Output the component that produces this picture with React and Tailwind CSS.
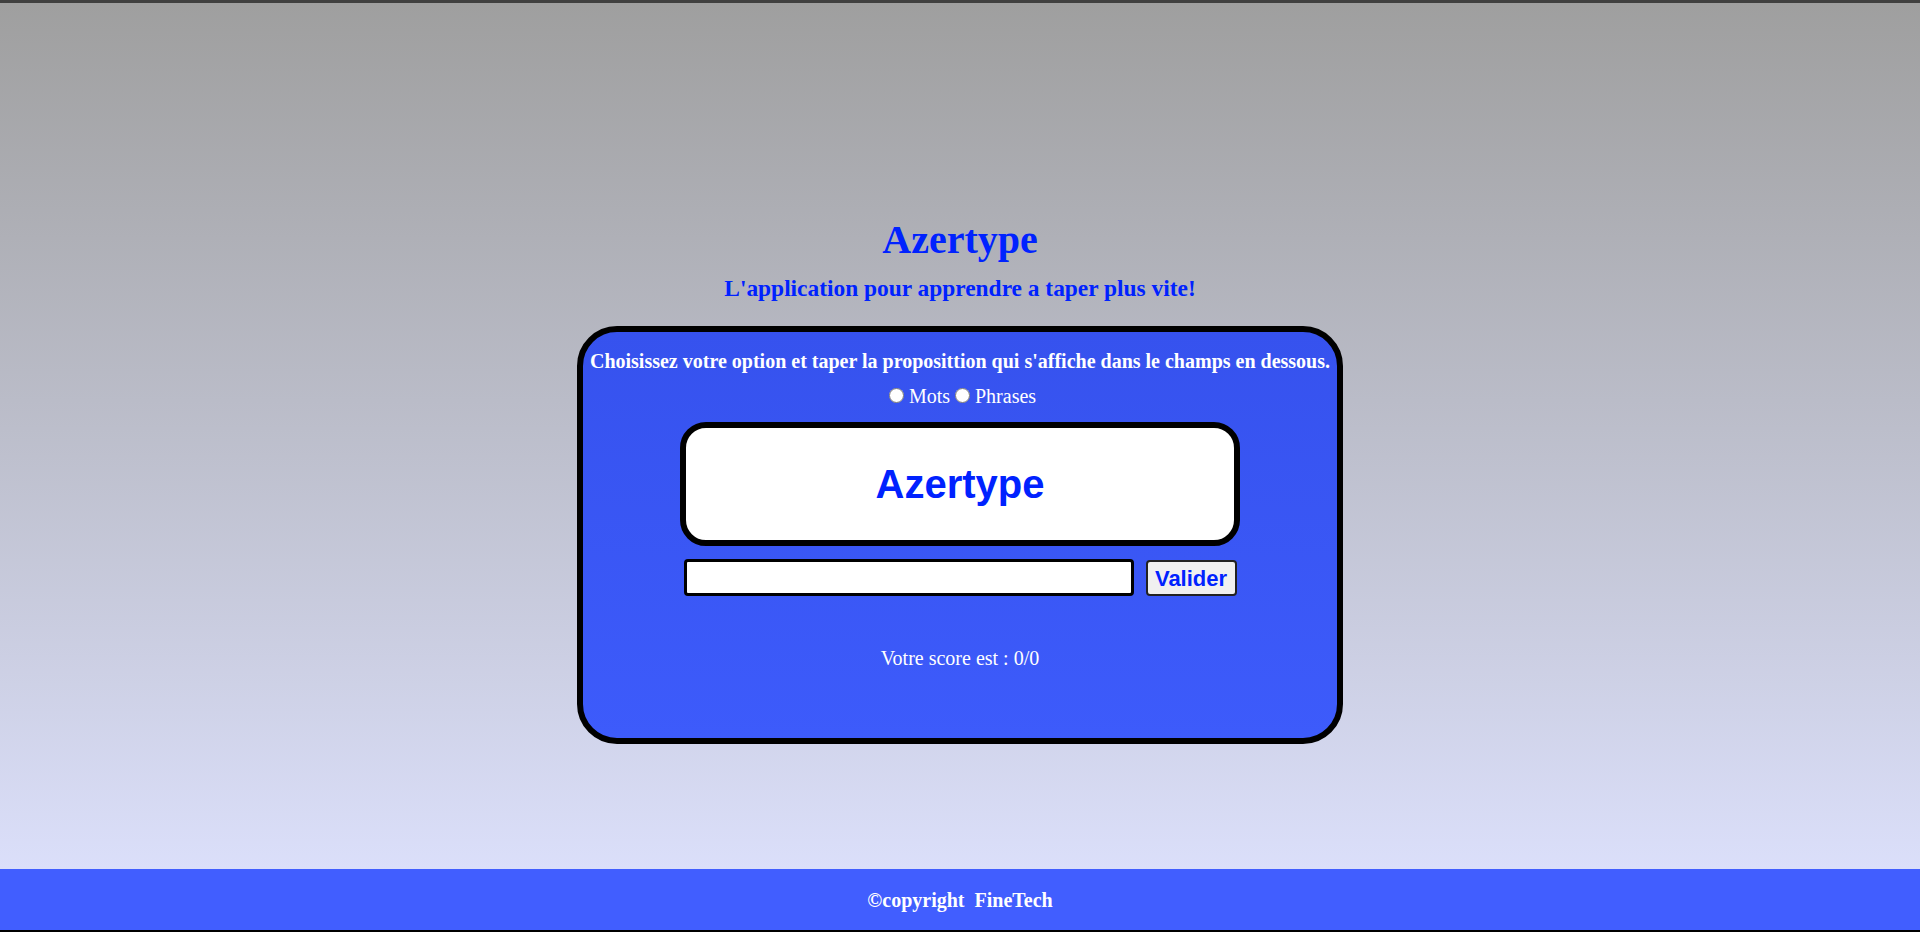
import { useState } from 'react'

export default function App() {
  const [mode, setMode] = useState('')
  const [value, setValue] = useState('')

  return (
    <div className="h-[932px] flex flex-col font-['Liberation_Serif',serif] border-t-[3px] border-[#404040]">
      <main className="flex-1 flex flex-col items-center bg-gradient-to-b from-[#9f9f9f] to-[#dbdffa]">
        <h1 className="mt-[215px] text-[40px] leading-[44px] font-bold text-[#0022ff]">Azertype</h1>
        <h2 className="mt-[12px] text-[23.4px] leading-[28px] font-bold text-[#0022ff]">
          L'application pour apprendre a taper plus vite!
        </h2>

        <section className="mt-[24px] w-[766px] h-[418px] border-[6px] border-black rounded-[40px] bg-gradient-to-b from-[#3652ee] to-[#3d5bfb] flex flex-col items-center text-white">
          <p className="mt-[18px] text-[20px] leading-[23px] font-bold">
            Choisissez votre option et taper la proposittion qui s'affiche dans le champs en dessous.
          </p>
          <div className="mt-[11px] text-[20px] leading-[24px]">
            <label>
              <input
                type="radio"
                name="mode"
                checked={mode === 'mots'}
                onChange={() => setMode('mots')}
                className="w-[15px] h-[15px] ml-[5px] mr-[5px] mt-[3px]"
              />
              Mots
            </label>
            <label>
              <input
                type="radio"
                name="mode"
                checked={mode === 'phrases'}
                onChange={() => setMode('phrases')}
                className="w-[15px] h-[15px] ml-[5px] mr-[5px] mt-[3px]"
              />
              Phrases
            </label>
          </div>

          <div className="mt-[14px] w-[560px] h-[124px] border-[6px] border-black rounded-[26px] bg-white flex items-center justify-center">
            <span className="font-['Liberation_Sans',sans-serif] text-[40px] font-bold text-[#0022ff]">Azertype</span>
          </div>

          <div className="mt-[13px] flex items-center gap-[12px]">
            <input
              type="text"
              value={value}
              onChange={(e) => setValue(e.target.value)}
              className="w-[450px] h-[37px] border-[3px] border-black rounded-[4px] bg-white px-2 outline-none"
            />
            <button className="w-[91px] h-[36px] border-2 border-[#222] rounded-[4px] bg-[#f0f0f0] font-['Liberation_Sans',sans-serif] text-[22px] font-bold text-[#0022ff]">
              Valider
            </button>
          </div>

          <p className="mt-[50px] text-[20px] leading-[24px]">Votre score est : 0/0</p>
        </section>
      </main>

      <footer className="h-[63px] bg-[#415eff] border-b-2 border-black flex items-center justify-center">
        <p className="text-[20px] font-bold text-white">©copyright&nbsp; FineTech</p>
      </footer>
    </div>
  )
}
